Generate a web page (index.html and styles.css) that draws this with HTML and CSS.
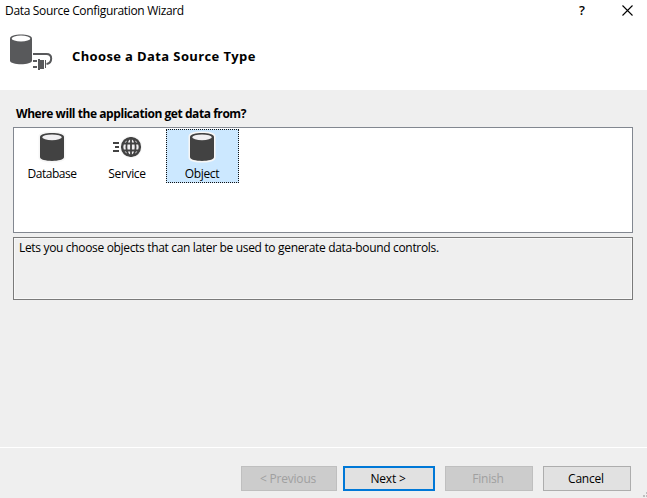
FILE: index.html
```html
<!DOCTYPE html>
<html lang="en">
<head>
<meta charset="utf-8">
<title>Data Source Configuration Wizard</title>
<link rel="stylesheet" href="styles.css">
</head>
<body>
<div class="wizard">
  <header class="header">
    <div class="titlebar">
      <span class="title">Data Source Configuration Wizard</span>
      <span class="help">?</span>
      <svg class="close" width="11" height="11" viewBox="0 0 11 11"><path d="M.5 .5L10.5 10.5M10.5 .5L.5 10.5" stroke="#000" stroke-width="1.1"/></svg>
    </div>
    <div class="banner">
      <svg class="banner-icon" width="44" height="38" viewBox="0 0 44 38">
        <path d="M1 4.500C1 -.8 23 -.8 23 4.500V26.500C23 31.500 1 31.500 1 26.500Z" fill="#58595b"/>
        <ellipse cx="12" cy="4.500" rx="9.300" ry="3" fill="#fff"/>
        <path d="M24 20H37.500C41 20 42.200 22 42.200 24.500C42.200 27.500 40.500 29.500 37.500 30" fill="none" stroke="#58595b" stroke-width="2"/>
        <path d="M24 26h4v2h-4zM24 32h4v2h-4zM29 25h2v11h-2zM30.500 26h4.500v9h-4.500zM36 26h1v8h-1z" fill="#58595b"/>
      </svg>
      <h1 class="heading">Choose a Data Source Type</h1>
    </div>
  </header>
  <main class="content">
    <h2 class="question">Where will the application get data from?</h2>
    <div class="list">
      <div class="item">
        <svg class="icon" width="32" height="32" viewBox="0 0 32 32">
          <path class="halo" d="M4 5.500C4 .8 28 .8 28 5.500V26.500C28 31.200 4 31.200 4 26.500Z"/>
          <path d="M4 6C4 .8 28 .8 28 6V26C28 31.200 4 31.200 4 26Z" fill="#424242"/>
          <ellipse cx="16" cy="6.300" rx="9.800" ry="2.900" fill="#f0eff1"/>
        </svg>
        <span class="label database">Database</span>
      </div>
      <div class="item">
        <svg class="icon" width="32" height="32" viewBox="0 0 32 32">
          <circle cx="20" cy="16" r="10.700" fill="none" stroke="#f6f6f6"/>
          <circle cx="20" cy="16" r="8.900" fill="#f0eff1" stroke="#424242" stroke-width="2.400"/>
          <path d="M12 12.500H28M12 19.500H28M20 7V25" stroke="#424242" stroke-width="1.800"/>
          <ellipse cx="20" cy="16" rx="4.600" ry="9" fill="none" stroke="#424242" stroke-width="1.800"/>
          <path d="M2 11h6v2H2zM4 15h4v2H4zM2 19h6v2H2z" fill="#424242"/>
        </svg>
        <span class="label service">Service</span>
      </div>
      <div class="item selected">
        <svg class="icon" width="32" height="32" viewBox="0 0 32 32">
          <path class="halo" d="M4 5.500C4 .8 28 .8 28 5.500V26.500C28 31.200 4 31.200 4 26.500Z"/>
          <path d="M4 6C4 .8 28 .8 28 6V26C28 31.200 4 31.200 4 26Z" fill="#424242"/>
          <ellipse cx="16" cy="6.300" rx="9.800" ry="2.900" fill="#f0eff1"/>
        </svg>
        <span class="label object">Object</span>
      </div>
    </div>
    <div class="description"><span class="desc-text">Lets you choose objects that can later be used to generate data-bound controls.</span></div>
  </main>
  <footer class="footer">
    <button class="btn previous" disabled>&lt; Previous</button>
    <button class="btn next">Next &gt;</button>
    <button class="btn finish" disabled>Finish</button>
    <button class="btn cancel">Cancel</button>
    <svg class="grip" width="4" height="6" viewBox="0 0 4 6"><path d="M3 0h1v2H3zM0 3h2v2H0zM3 3h1v2H3z" fill="#bfbfbf"/></svg>
  </footer>
</div>
</body>
</html>
```
FILE: styles.css
```css
* { box-sizing: border-box; }
body {
  margin: 0;
  font: 12px/16px "Open Sans", "Noto Sans", sans-serif;
  color: #000;
}
.wizard {
  width: 647px;
  height: 498px;
  display: flex;
  flex-direction: column;
  background: #efefef;
  overflow: hidden;
  white-space: nowrap;
}
.header { height: 90px; background: #fff; }
.titlebar {
  height: 22px;
  display: flex;
  align-items: center;
  padding: 0 14px 0 5px;
}
.title { flex: 1; letter-spacing: -.33px; }
.help { width: 8px; margin-right: 35px; font-size: 13px; font-weight: 600; line-height: 14px; margin-top: -2px; }
.close { display: block; margin-top: -2px; }
.banner { display: flex; align-items: center; height: 68px; padding-left: 9px; }
.banner-icon { margin-top: -6px; }
.heading { margin: 0 0 0 19px; font-size: 13px; line-height: 18px; letter-spacing: .38px; }
.content { height: 357px; padding: 16px 14px 0 13px; }
.question { margin: 0 0 5px 3px; font-size: 12px; line-height: 16px; letter-spacing: -.44px; }
.list {
  height: 106px;
  border: 1px solid #828790;
  background: #fff;
  display: flex;
  gap: 2px;
  padding: 1px 2px;
}
.item {
  width: 73px;
  height: 54px;
  display: flex;
  flex-direction: column;
  align-items: center;
  padding-top: 2px;
}
.item.selected {
  background: #cce8ff;
  outline: 1px dotted #111;
  outline-offset: -1px;
}
.icon { display: block; flex: none; margin-right: 1px; }
.halo { fill: none; stroke: #f6f6f6; stroke-width: 3px; }
.label { margin: 3px 1px 0 0; letter-spacing: -.35px; }
.database { letter-spacing: -.5px; }
.description {
  height: 63px;
  margin-top: 4px;
  border: 1px solid #7a7a7a;
  box-shadow: inset 0 0 0 1px #f8f8f8;
  padding: 2px 5px;
}
.desc-text { letter-spacing: -.33px; }
.footer {
  position: relative;
  flex: 1;
  border-top: 1px solid #fff;
  display: flex;
  padding: 18px 0 0 241px;
}
.btn {
  height: 25px;
  border: 1px solid #adadad;
  background: #e1e1e1;
  padding: 0 2px 0 0;
  font: inherit;
  color: #000;
  letter-spacing: -.2px;
}
.btn:disabled { background: #ccc; border-color: #bfbfbf; color: #a0a0a0; }
.previous { width: 96px; }
.next { width: 92px; margin-left: 6px; border: 2px solid #0078d7; }
.finish { width: 88px; margin-left: 10px; }
.cancel { width: 88px; margin-left: 10px; }
.grip { position: absolute; right: 0; bottom: 0; }
```
